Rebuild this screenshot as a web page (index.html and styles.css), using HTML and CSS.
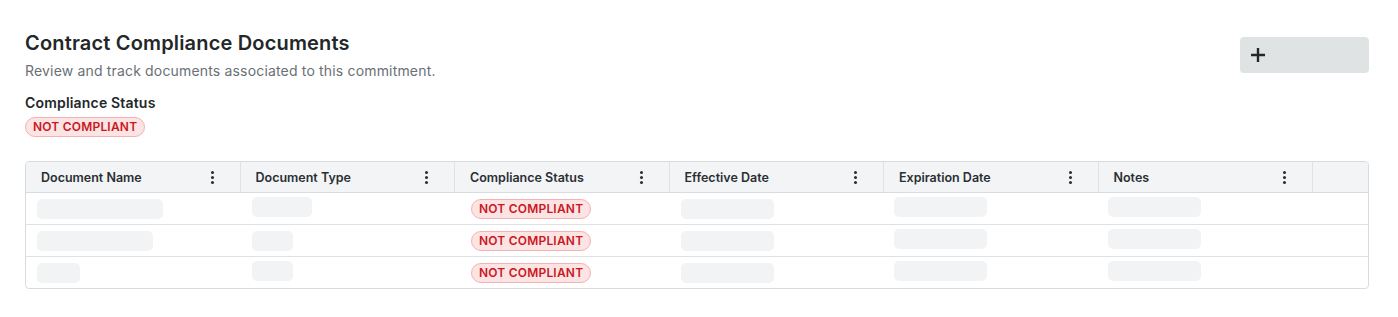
FILE: index.html
```html
<!DOCTYPE html>
<html lang="en">
<head>
    <meta charset="UTF-8">
    <title>Contract Compliance Documents</title>
    <link rel="stylesheet" href="styles.css">
</head>
<body>
    <div class="page">
        <div class="top">
            <div>
                <h1 class="title">Contract Compliance Documents</h1>
                <p class="subtitle">Review and track documents associated to this commitment.</p>
                <div class="status-label">Compliance Status</div>
                <span class="badge">NOT COMPLIANT</span>
            </div>
            <button class="add-btn" aria-label="Add">
                <svg width="14" height="14" viewBox="0 0 14 14"><path d="M7 0v14M0 7h14" stroke="#232729" stroke-width="2.4" fill="none"/></svg>
            </button>
        </div>

        <div class="table">
            <div class="row head">
                <div class="cell">Document Name<span class="kebab"><i></i><i></i><i></i></span></div>
                <div class="cell">Document Type<span class="kebab"><i></i><i></i><i></i></span></div>
                <div class="cell">Compliance Status<span class="kebab"><i></i><i></i><i></i></span></div>
                <div class="cell">Effective Date<span class="kebab"><i></i><i></i><i></i></span></div>
                <div class="cell">Expiration Date<span class="kebab"><i></i><i></i><i></i></span></div>
                <div class="cell">Notes<span class="kebab"><i></i><i></i><i></i></span></div>
                <div class="cell last"></div>
            </div>
            <div class="row">
                <div class="cell"><span class="skel w126"></span></div>
                <div class="cell"><span class="skel w60 up"></span></div>
                <div class="cell pad"><span class="badge">NOT COMPLIANT</span></div>
                <div class="cell"><span class="skel w93"></span></div>
                <div class="cell narrow"><span class="skel w93 up"></span></div>
                <div class="cell narrower"><span class="skel w93 up"></span></div>
                <div class="cell last"></div>
            </div>
            <div class="row">
                <div class="cell"><span class="skel w116"></span></div>
                <div class="cell"><span class="skel w41"></span></div>
                <div class="cell pad"><span class="badge">NOT COMPLIANT</span></div>
                <div class="cell"><span class="skel w93"></span></div>
                <div class="cell narrow"><span class="skel w93 up"></span></div>
                <div class="cell narrower"><span class="skel w93 up"></span></div>
                <div class="cell last"></div>
            </div>
            <div class="row">
                <div class="cell"><span class="skel w43"></span></div>
                <div class="cell"><span class="skel w41 up"></span></div>
                <div class="cell pad"><span class="badge">NOT COMPLIANT</span></div>
                <div class="cell"><span class="skel w93"></span></div>
                <div class="cell narrow"><span class="skel w93 up"></span></div>
                <div class="cell narrower"><span class="skel w93 up"></span></div>
                <div class="cell last"></div>
            </div>
        </div>
    </div>
</body>
</html>
```

FILE: styles.css
```css
body {
    margin: 0;
    background-color: #fff;
    color: #232729;
    font-family: Inter, "Noto Sans", sans-serif;
}
.page {
    padding: 29px 29px 20px 25px;
}
.top {
    display: flex;
    justify-content: space-between;
    align-items: flex-start;
}
.title {
    margin: 0;
    font-size: 20px;
    line-height: 28px;
    font-weight: 600;
    letter-spacing: 0.17px;
}
.subtitle {
    margin: 4px 0 0;
    font-size: 14px;
    line-height: 20px;
    color: #6a7075;
    letter-spacing: 0.17px;
}
.status-label {
    margin-top: 12px;
    font-size: 14px;
    line-height: 20px;
    font-weight: 600;
    letter-spacing: 0.18px;
}
.badge {
    display: inline-block;
    margin-top: 4px;
    height: 18px;
    line-height: 18px;
    padding: 0 7px;
    font-size: 12px;
    font-weight: 600;
    letter-spacing: 0.2px;
    color: #c8191f;
    background-color: #fde4e4;
    border: 1px solid #f3b1b1;
    border-radius: 10px;
}
.add-btn {
    margin-top: 8px;
    width: 129px;
    height: 36px;
    background-color: #e0e3e4;
    border: none;
    border-radius: 4px;
    padding: 0 0 0 11px;
    display: flex;
    align-items: center;
    cursor: pointer;
}
.table {
    margin-top: 24px;
    border: 1px solid #d9dcde;
    border-radius: 4px;
    overflow: hidden;
}
.row {
    display: grid;
    grid-template-columns: repeat(6, 214.5px) 1fr;
    height: 31px;
    border-top: 1px solid #dfe1e3;
}
.row.head {
    border-top: none;
    height: 30px;
    background-color: #f3f4f6;
    border-bottom: 1px solid #d9dcde;
}
.row.head + .row {
    border-top: none;
}
.cell {
    display: flex;
    align-items: center;
    padding-left: 11px;
}
.cell.pad {
    padding-left: 16px;
}
.cell.narrow {
    padding-left: 10px;
}
.cell.narrower {
    padding-left: 9px;
}
.head .cell {
    padding: 0 26px 0 15px;
    justify-content: space-between;
    font-size: 12.5px;
    font-weight: 600;
    color: #2a2f33;
    border-right: 1px solid #dfe1e3;
}
.head .cell.last {
    border-right: none;
}
.kebab {
    display: flex;
    flex-direction: column;
    gap: 2px;
}
.kebab i {
    display: block;
    width: 3px;
    height: 3px;
    border-radius: 50%;
    background-color: #2a2f33;
}
.cell .badge {
    margin-top: 0;
}
.skel {
    display: block;
    height: 20px;
    border-radius: 5px;
    background-color: #f2f3f5;
}
.skel.up {
    margin-top: -3px;
}
.w126 { width: 126px; }
.w116 { width: 116px; }
.w93 { width: 93px; }
.w60 { width: 60px; }
.w43 { width: 43px; }
.w41 { width: 41px; }
```
